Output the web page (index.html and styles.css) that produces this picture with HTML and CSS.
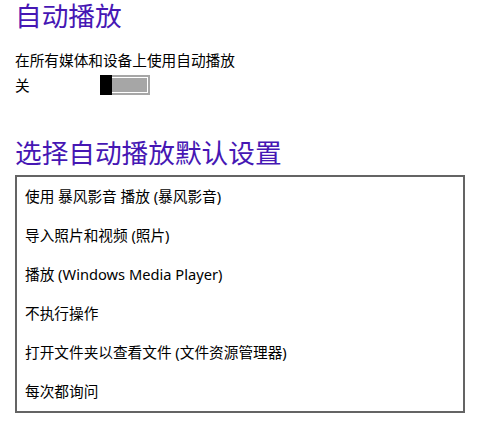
FILE: index.html
```html
<!DOCTYPE html>
<html lang="zh-CN">
<head>
    <meta charset="UTF-8">
    <meta name="viewport" content="width=device-width, initial-scale=1.0">
    <title>自动播放</title>
    <link rel="stylesheet" href="styles.css">
</head>
<body>
    <div class="page">
        <h1 class="section-title">自动播放</h1>
        <div class="setting-label">在所有媒体和设备上使用自动播放</div>
        <div class="toggle-row">
            <span class="toggle-state">关</span>
            <div class="toggle">
                <span class="toggle-thumb"></span>
                <span class="toggle-track"></span>
            </div>
        </div>

        <h1 class="section-title second">选择自动播放默认设置</h1>
        <ul class="choice-list">
            <li>使用 暴风影音 播放 (暴风影音)</li>
            <li>导入照片和视频 (照片)</li>
            <li>播放 (Windows Media Player)</li>
            <li>不执行操作</li>
            <li>打开文件夹以查看文件 (文件资源管理器)</li>
            <li>每次都询问</li>
        </ul>
    </div>
</body>
</html>
```

FILE: styles.css
```css
body {
    margin: 0;
    background: #ffffff;
    font-family: 'Noto Sans', 'Noto Sans CJK SC', sans-serif;
    color: #000000;
}

.page {
    padding: 0 13px 0 15px;
}

.section-title {
    margin: 0;
    font-size: 26.67px;
    line-height: 32px;
    font-weight: normal;
    color: #4617b4;
}

.section-title.second {
    margin-top: 42px;
}

.setting-label {
    margin-top: 18px;
    font-size: 14.67px;
    line-height: 20px;
}

.toggle-row {
    display: flex;
    align-items: center;
    margin-top: 5px;
    height: 20px;
    font-size: 14.67px;
}

.toggle-state {
    width: 85px;
    line-height: 20px;
}

.toggle {
    display: flex;
    width: 50px;
    height: 20px;
}

.toggle-thumb {
    width: 12px;
    background: #000000;
}

.toggle-track {
    flex: 1;
    box-sizing: border-box;
    border: 2px solid #a6a6a6;
    border-left: none;
    background: #a6a6a6;
    box-shadow: inset 0 1px #ffffff, inset -1px 0 #ffffff, inset 0 -1px #ffffff;
}

.choice-list {
    list-style: none;
    margin: 6px 0 0 0;
    padding: 0;
    width: 450px;
    box-sizing: border-box;
    border: 2px solid #646464;
}

.choice-list li {
    padding-left: 8px;
    font-size: 14.67px;
    line-height: 39px;
}
```
